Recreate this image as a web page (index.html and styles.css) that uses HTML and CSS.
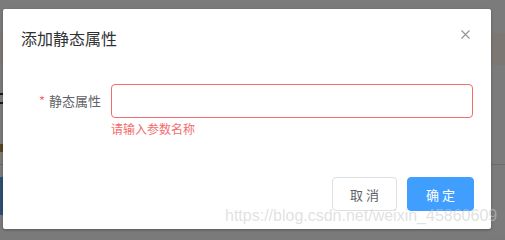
FILE: index.html
```html
<!DOCTYPE html>
<html lang="zh">
<head>
<meta charset="utf-8">
<title>添加静态属性</title>
<link rel="stylesheet" href="styles.css">
</head>
<body>
<div class="page">
  <div class="bg-dot"></div>
  <div class="bg-mark"></div>
  <div class="bg-mark2"></div>
  <div class="bg-band"></div>
  <div class="bg-line"></div>
  <div class="bg-blue"></div>
</div>
<div class="overlay">
  <div class="dialog">
    <div class="dialog-header">
      <span class="dialog-title">添加静态属性</span>
      <button class="dialog-close" aria-label="关闭">
        <svg width="9" height="9" viewBox="0 0 9 9"><path d="M0.5 0.5 L8.5 8.5 M8.5 0.5 L0.5 8.5" stroke="#909399" stroke-width="1.1" fill="none"/></svg>
      </button>
    </div>
    <div class="dialog-body">
      <div class="form-item">
        <label class="form-label"><span class="req">*</span>静态属性</label>
        <div class="form-content">
          <input class="form-input" type="text">
          <div class="form-error">请输入参数名称</div>
        </div>
      </div>
    </div>
    <div class="dialog-footer">
      <button class="btn btn-default">取 消</button>
      <button class="btn btn-primary">确 定</button>
    </div>
  </div>
  <div class="watermark">https://blog.csdn.net/weixin_45860609</div>
</div>
</body>
</html>
```

FILE: styles.css
```css
html, body {
  margin: 0;
  padding: 0;
  width: 505px;
  height: 235px;
  overflow: hidden;
  font-family: "Noto Sans CJK SC", "Liberation Sans", sans-serif;
  background: #f5f5f5;
}

.page {
  position: relative;
  width: 505px;
  height: 235px;
  background: #f6f6f6;
}

.bg-dot {
  position: absolute;
  left: -5px;
  top: 42px;
  width: 10px;
  height: 10px;
  border-radius: 50%;
  background: #e6a23c;
}

.bg-mark {
  position: absolute;
  left: 0;
  top: 93px;
  width: 3px;
  height: 11px;
  border-top: 2px solid #303133;
  border-bottom: 2px solid #303133;
  box-sizing: border-box;
}

.bg-mark2 {
  position: absolute;
  left: 0;
  top: 144px;
  width: 3px;
  height: 8px;
  background: #b08840;
}

.bg-band {
  position: absolute;
  left: 0;
  right: 0;
  top: 33px;
  height: 32px;
  background: #f8eee4;
}

.bg-line {
  position: absolute;
  left: 0;
  right: 0;
  top: 164px;
  height: 1px;
  background: #d8d8d8;
}

.bg-blue {
  position: absolute;
  left: 0;
  top: 177px;
  width: 20px;
  height: 38px;
  background: #5a9ee8;
}

.overlay {
  position: absolute;
  inset: 0;
  background: rgba(0, 0, 0, 0.5);
}

.dialog {
  position: relative;
  margin: 9px 0 0 3px;
  width: 488px;
  height: 220px;
  background: #fff;
  border-radius: 2px;
  box-shadow: 0 1px 3px rgba(0, 0, 0, 0.3);
  box-sizing: border-box;
  display: flex;
  flex-direction: column;
}

.dialog-header {
  padding: 17px 18px 8px;
  height: 24px;
  line-height: 24px;
}

.dialog-title {
  font-size: 16px;
  color: #303133;
}

.dialog-close {
  position: absolute;
  top: 21px;
  right: 21px;
  width: 9px;
  height: 9px;
  padding: 0;
  border: 0;
  background: none;
  display: flex;
}

.dialog-body {
  padding: 26px 18px 0 18px;
  flex: 1;
}

.form-item {
  display: flex;
  align-items: flex-start;
}

.form-label {
  width: 90px;
  box-sizing: border-box;
  padding-right: 10px;
  text-align: right;
  font-size: 13px;
  line-height: 34px;
  color: #606266;
}

.req {
  color: #f56c6c;
  margin-right: 4px;
}

.form-content {
  width: 362px;
}

.form-input {
  display: block;
  width: 362px;
  height: 34px;
  box-sizing: border-box;
  border: 1px solid #f56c6c;
  border-radius: 4px;
  outline: none;
  padding: 0 13px;
  font-size: 13px;
  background: #fff;
}

.form-error {
  padding-top: 4px;
  font-size: 12px;
  line-height: 14px;
  color: #f56c6c;
}

.dialog-footer {
  display: flex;
  justify-content: flex-end;
  gap: 10px;
  padding: 0 17px 18px;
}

.btn {
  height: 34px;
  width: 66px;
  box-sizing: border-box;
  border-radius: 4px;
  font-family: "Noto Sans CJK SC", sans-serif;
  font-size: 13px;
  padding: 0;
  white-space: pre;
}

.btn-default {
  width: 65px;
  background: #fff;
  border: 1px solid #dcdfe6;
  color: #606266;
}

.btn-primary {
  width: 67px;
  background: #409eff;
  border: 1px solid #409eff;
  color: #fff;
}

.watermark {
  position: absolute;
  left: 225px;
  top: 207px;
  font-family: "Liberation Sans", sans-serif;
  font-size: 16px;
  color: rgba(200, 200, 200, 0.55);
  white-space: nowrap;
}
```
